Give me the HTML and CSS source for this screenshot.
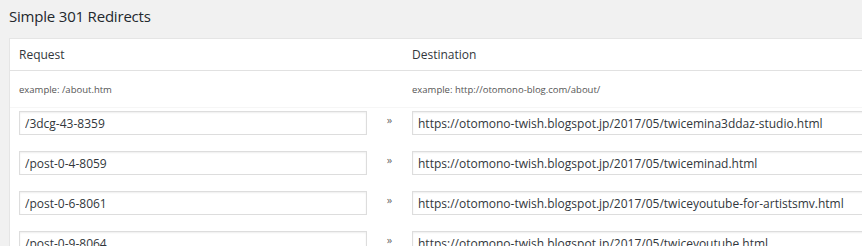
FILE: index.html
```html
<!DOCTYPE html>
<html lang="en">
<head>
  <meta charset="UTF-8" />
  <title>Simple 301 Redirects</title>
  <link rel="stylesheet" href="styles.css">
</head>
<body>
  <div class="wrap">
    <h2>Simple 301 Redirects</h2>

    <!-- REDIRECTS TABLE -->
    <div class="card">
      <div class="row head">
        <div>Request</div>
        <div></div>
        <div>Destination</div>
      </div>
      <div class="row example">
        <div>example: /about.htm</div>
        <div></div>
        <div>example: http://otomono-blog.com/about/</div>
      </div>
      <div class="row entry">
        <input type="text" class="req" value="/3dcg-43-8359" />
        <span class="arrow">&raquo;</span>
        <input type="text" class="dest" value="https://otomono-twish.blogspot.jp/2017/05/twicemina3ddaz-studio.html" />
      </div>
      <div class="row entry">
        <input type="text" class="req" value="/post-0-4-8059" />
        <span class="arrow">&raquo;</span>
        <input type="text" class="dest" value="https://otomono-twish.blogspot.jp/2017/05/twiceminad.html" />
      </div>
      <div class="row entry">
        <input type="text" class="req" value="/post-0-6-8061" />
        <span class="arrow">&raquo;</span>
        <input type="text" class="dest" value="https://otomono-twish.blogspot.jp/2017/05/twiceyoutube-for-artistsmv.html" />
      </div>
      <div class="row entry">
        <input type="text" class="req" value="/post-0-9-8064" />
        <span class="arrow">&raquo;</span>
        <input type="text" class="dest" value="https://otomono-twish.blogspot.jp/2017/05/twiceyoutube.html" />
      </div>
    </div>
  </div>
</body>
</html>
```

FILE: styles.css
```css
body {
  margin: 0;
  background: #f1f1f1;
  color: #23282d;
  font-family: "Open Sans", sans-serif;
  font-size: 12px;
  overflow: hidden;
}

.wrap {
  padding: 0 0 0 9px;
}

h2 {
  font-size: 15px;
  letter-spacing: -0.2px;
  font-weight: 400;
  margin: 0;
  padding: 5px 0 0;
  height: 33px;
  line-height: 22px;
  color: #23282d;
}

.card {
  background: #fff;
  border: 1px solid #e5e5e5;
  border-right: none;
  width: 900px;
}

.row {
  display: grid;
  grid-template-columns: 348px 45px 1fr;
  padding-left: 9px;
  align-items: center;
}

.head {
  height: 31px;
  border-bottom: 1px solid #e1e1e1;
  font-size: 12px;
  color: #32373c;
}

.example {
  height: 36px;
  border-bottom: 1px solid #f6f6f6;
  font-size: 9.5px;
  color: #555;
}

.entry {
  height: 40px;
}

.entry:nth-child(3) {
  margin-top: 3px;
}

input {
  font-family: "Open Sans", sans-serif;
  font-size: 12px;
  color: #32373c;
  height: 24px;
  padding: 0 5px;
  border: 1px solid #ddd;
  box-shadow: inset 0 1px 2px rgba(0,0,0,0.07);
  box-sizing: border-box;
  margin: 0;
  align-self: start;
}

.req {
  width: 348px;
}

.dest {
  width: 470px;
}

.arrow {
  text-align: center;
  font-size: 11px;
  color: #666;
  align-self: start;
  line-height: 18px;
}
```
